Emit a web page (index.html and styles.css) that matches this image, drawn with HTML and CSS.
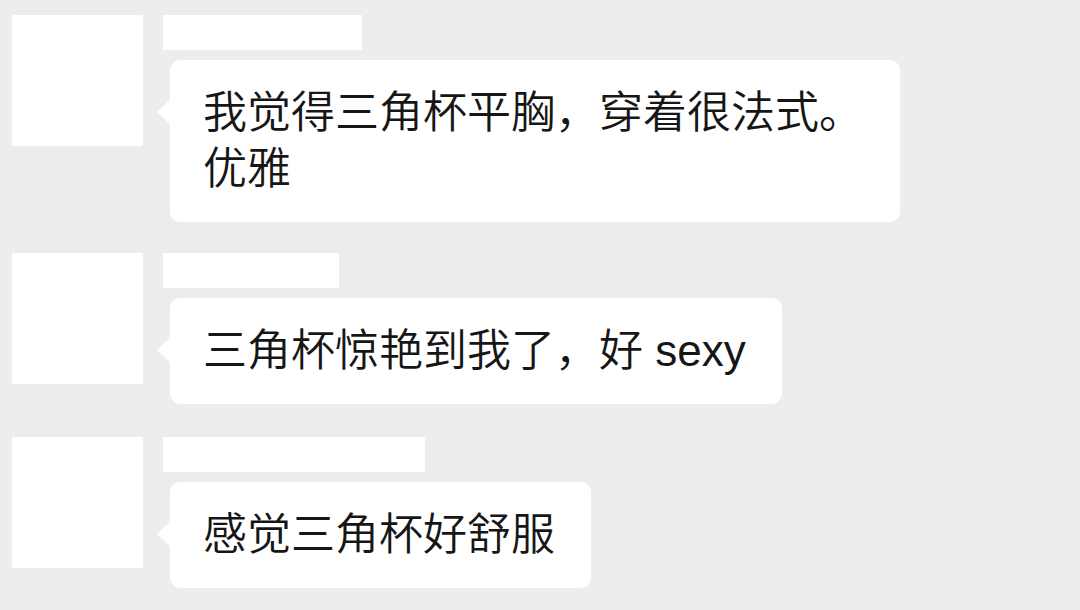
FILE: index.html
```html
<!DOCTYPE html>
<html lang="zh-CN">
<head>
    <meta charset="UTF-8">
    <meta name="viewport" content="width=device-width, initial-scale=1.0">
    <title>聊天记录</title>
    <link rel="stylesheet" href="styles.css">
</head>
<body>
    <div class="chat">
        <div class="message">
            <div class="avatar"></div>
            <div class="content">
                <div class="name name-long"></div>
                <div class="bubble">我觉得三角杯平胸，穿着很法式。优雅</div>
            </div>
        </div>
        <div class="message">
            <div class="avatar"></div>
            <div class="content">
                <div class="name name-short"></div>
                <div class="bubble">三角杯惊艳到我了，好 sexy</div>
            </div>
        </div>
        <div class="message message-last">
            <div class="avatar"></div>
            <div class="content">
                <div class="name name-wide"></div>
                <div class="bubble">感觉三角杯好舒服</div>
            </div>
        </div>
    </div>
</body>
</html>
```

FILE: styles.css
```css
body {
    margin: 0;
    padding: 0;
    background-color: #ededed;
    font-family: "Liberation Sans", "Noto Sans CJK SC", sans-serif;
    color: #161616;
}
.chat {
    display: flex;
    flex-direction: column;
    gap: 31px;
    padding: 15px 12px 0;
}
.message {
    display: flex;
    align-items: flex-start;
    gap: 20px;
}
.message-last {
    margin-top: 2px;
}
.avatar {
    width: 131px;
    height: 131px;
    flex-shrink: 0;
    background-color: #fff;
}
.content {
    display: flex;
    flex-direction: column;
    align-items: flex-start;
    gap: 10px;
}
.name {
    height: 35px;
    background-color: #fff;
}
.name-long {
    width: 199px;
}
.name-short {
    width: 176px;
}
.name-wide {
    width: 262px;
}
.bubble {
    position: relative;
    margin-left: 7px;
    max-width: 730px;
    box-sizing: border-box;
    padding: 25px 36px 25px 33px;
    background-color: #fff;
    border-radius: 10px;
    font-size: 44px;
    font-weight: 350;
    line-height: 56px;
}
.bubble::before {
    content: "";
    position: absolute;
    left: -13px;
    top: 40px;
    border-top: 12px solid transparent;
    border-bottom: 12px solid transparent;
    border-right: 13px solid #fff;
}
```
